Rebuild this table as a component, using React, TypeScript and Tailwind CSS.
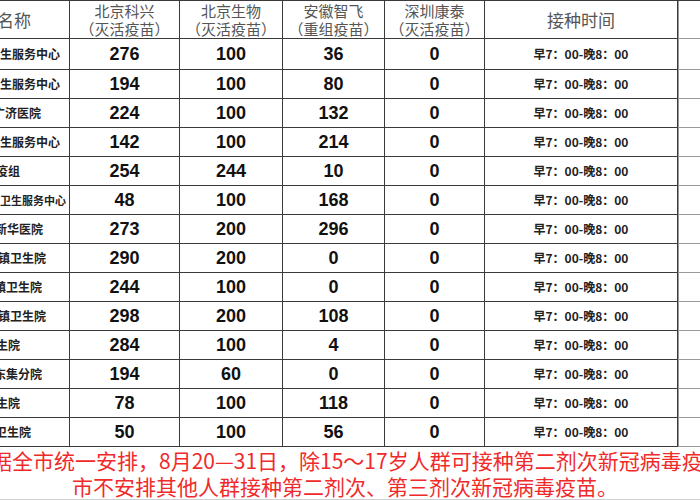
import React from 'react';

const rows = [
  { name: '生服务中心', ml: 0, fs: 12, a: '276', b: '100', c: '36', d: '0' },
  { name: '生服务中心', ml: 0, fs: 12, a: '194', b: '100', c: '80', d: '0' },
  { name: '广济医院', ml: -7, fs: 12, a: '224', b: '100', c: '132', d: '0' },
  { name: '生服务中心', ml: 0, fs: 12, a: '142', b: '100', c: '214', d: '0' },
  { name: '疫组', ml: -4, fs: 12, a: '254', b: '244', c: '10', d: '0' },
  { name: '卫生服务中心', ml: 0, fs: 11, a: '48', b: '100', c: '168', d: '0' },
  { name: '新华医院', ml: -5, fs: 12, a: '273', b: '200', c: '296', d: '0' },
  { name: '镇卫生院', ml: -2, fs: 12, a: '290', b: '200', c: '0', d: '0' },
  { name: '镇卫生院', ml: -6, fs: 12, a: '244', b: '100', c: '0', d: '0' },
  { name: '镇卫生院', ml: -2, fs: 12, a: '298', b: '200', c: '108', d: '0' },
  { name: '生院', ml: -4, fs: 12, a: '284', b: '100', c: '4', d: '0' },
  { name: '东集分院', ml: -6, fs: 12, a: '194', b: '60', c: '0', d: '0' },
  { name: '生院', ml: -4, fs: 12, a: '78', b: '100', c: '118', d: '0' },
  { name: '卫生院', ml: -5, fs: 12, a: '50', b: '100', c: '56', d: '0' },
];

const cjk = "font-['Noto_Sans_CJK_SC',sans-serif]";
const num = "font-['Liberation_Sans','Noto_Sans_CJK_SC',sans-serif]";
const cell = 'flex items-center justify-center border-r border-b border-[#3a3a3a]';

const Header = ({ top, bottom }: { top: string; bottom: string }) => (
  <div className={`${cell} flex-col leading-[18px] text-[15px] text-[#555]`}>
    <span>{top}</span>
    <span>{bottom}</span>
  </div>
);

export default function App() {
  return (
    <div className={`w-[700px] h-[500px] overflow-hidden bg-white ${cjk}`}>
      <div className="grid grid-cols-[70px_110px_103px_102px_100px_193px_22px] grid-rows-[38px_31px_repeat(13,29px)] border-t border-[#3a3a3a]">
        <div className="flex items-center border-r border-b border-[#3a3a3a] text-[17px] text-[#555] overflow-hidden whitespace-nowrap">
          <span className="ml-[-3px]">名称</span>
        </div>
        <Header top="北京科兴" bottom="（灭活疫苗）" />
        <Header top="北京生物" bottom="（灭活疫苗）" />
        <Header top="安徽智飞" bottom="（重组疫苗）" />
        <Header top="深圳康泰" bottom="（灭活疫苗）" />
        <div className={`${cell} text-[17px] text-[#555]`}>接种时间</div>
        <div className="border-l border-b border-[#9a9a9a]" />

        {rows.map((r, i) => (
          <React.Fragment key={i}>
            <div className="flex items-center border-r border-b border-[#3a3a3a] overflow-hidden whitespace-nowrap font-bold text-[#222]">
              <span style={{ marginLeft: r.ml, fontSize: r.fs }}>{r.name}</span>
            </div>
            <div className={`${cell} ${num} text-[18px] font-bold text-[#111]`}>{r.a}</div>
            <div className={`${cell} ${num} text-[18px] font-bold text-[#111]`}>{r.b}</div>
            <div className={`${cell} ${num} text-[18px] font-bold text-[#111]`}>{r.c}</div>
            <div className={`${cell} ${num} text-[18px] font-bold text-[#111]`}>{r.d}</div>
            <div className={`${cell} text-[12px] font-bold text-[#222]`}>早7：00-晚8：00</div>
            <div className="border-l border-b border-[#9a9a9a]" />
          </React.Fragment>
        ))}
      </div>

      <div className="h-[52px] overflow-hidden whitespace-nowrap text-[21px] leading-[26px] text-[#f02a2a]">
        <div className="ml-[-9px]">据全市统一安排，8月20—31日，除15～17岁人群可接种第二剂次新冠病毒疫苗外，全</div>
        <div className="ml-[72px]">市不安排其他人群接种第二剂次、第三剂次新冠病毒疫苗。</div>
      </div>
      <div className="grid grid-cols-[70px_110px_103px_102px_100px_193px_22px] h-[20px] border-t border-[#d0d0d0]">
        <div className="border-r border-[#d8d8d8]" />
        <div className="border-r border-[#d8d8d8]" />
        <div className="border-r border-[#d8d8d8]" />
        <div className="border-r border-[#d8d8d8]" />
        <div className="border-r border-[#d8d8d8]" />
        <div className="border-r border-[#d8d8d8]" />
        <div />
      </div>
    </div>
  );
}
